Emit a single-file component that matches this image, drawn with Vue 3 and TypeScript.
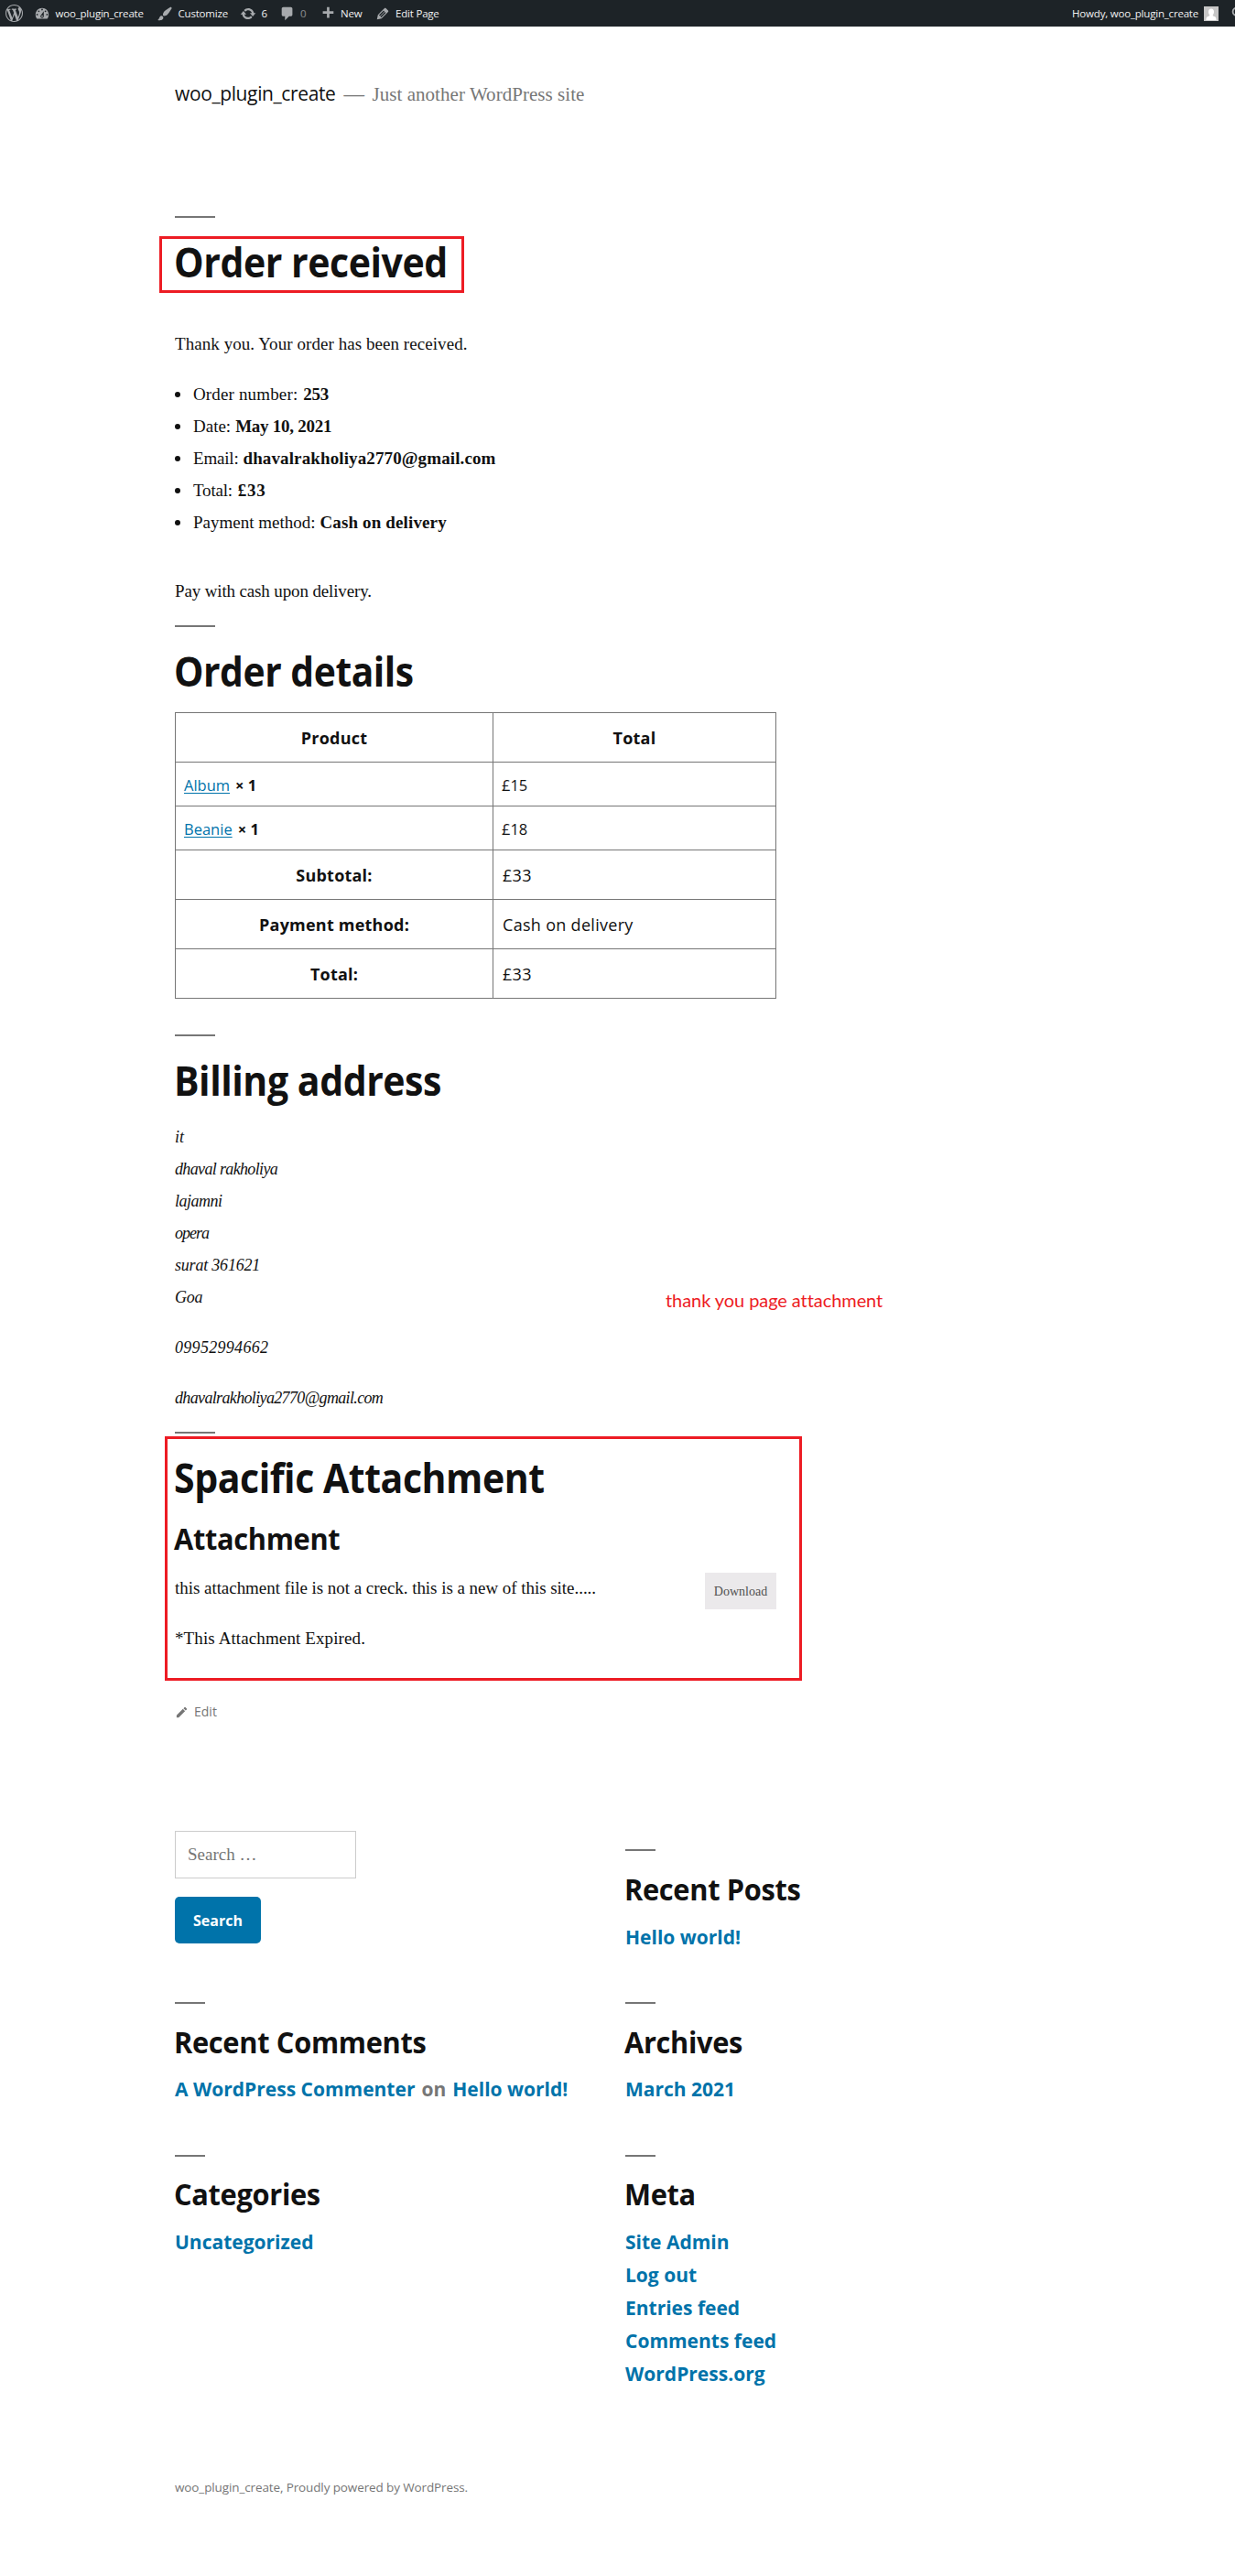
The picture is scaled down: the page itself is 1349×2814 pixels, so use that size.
<script setup lang="ts">
interface OrderField { label: string; value: string; cls: string }
interface FooterWidget { title: string; links: string[]; cls: string }

const fields: OrderField[] = [
  { label: 'Order number:', value: '253', cls: 'f-number' },
  { label: 'Date:', value: 'May 10, 2021', cls: 'f-date' },
  { label: 'Email:', value: 'dhavalrakholiya2770@gmail.com', cls: 'f-email' },
  { label: 'Total:', value: '£33', cls: 'f-total' },
  { label: 'Payment method:', value: 'Cash on delivery', cls: 'f-method' },
]
const products = [
  { name: 'Album', qty: 1, total: '£15' },
  { name: 'Beanie', qty: 1, total: '£18' },
]
const totals = [
  { label: 'Subtotal:', value: '£33' },
  { label: 'Payment method:', value: 'Cash on delivery' },
  { label: 'Total:', value: '£33' },
]
const address: string[] = ['it', 'dhaval rakholiya', 'lajamni', 'opera', 'surat 361621', 'Goa']
const archives: FooterWidget = { title: 'Archives', links: ['March 2021'], cls: 'archives' }
const categories: FooterWidget = { title: 'Categories', links: ['Uncategorized'], cls: 'categories' }
const meta: FooterWidget = {
  title: 'Meta',
  links: ['Site Admin', 'Log out', 'Entries feed', 'Comments feed', 'WordPress.org'],
  cls: 'meta',
}
</script>

<template>
  <div class="page">
    <nav class="adminbar">
      <svg class="icon wp" viewBox="0 0 20 20"><path d="M20 10c0-5.51-4.49-10-10-10C4.48 0 0 4.49 0 10c0 5.52 4.48 10 10 10 5.51 0 10-4.48 10-10zM7.78 15.37L4.37 6.22c.55-.02 1.17-.08 1.17-.08.5-.06.44-1.13-.06-1.11 0 0-1.45.11-2.37.11-.18 0-.37 0-.58-.01C4.12 2.69 6.87 1.11 10 1.11c2.33 0 4.45.87 6.05 2.34-.68-.11-1.65.39-1.65 1.58 0 .74.45 1.36.9 2.1.35.61.55 1.36.55 2.46 0 1.49-1.4 5-1.4 5l-3.03-8.37c.54-.02.82-.17.82-.17.5-.05.44-1.25-.06-1.22 0 0-1.44.12-2.38.12-.87 0-2.33-.12-2.33-.12-.5-.03-.56 1.2-.06 1.22l.92.08 1.26 3.41zM17.41 10c.24-.64.74-1.87.43-4.25.7 1.29 1.05 2.71 1.05 4.25 0 3.29-1.73 6.24-4.4 7.78.97-2.59 1.94-5.2 2.92-7.78zM6.1 18.09C3.12 16.65 1.11 13.53 1.11 10c0-1.3.23-2.48.72-3.59C3.25 10.3 4.67 14.2 6.1 18.09zm4.03-6.63l2.58 6.98c-.86.29-1.76.45-2.71.45-.79 0-1.57-.11-2.29-.33.81-2.38 1.62-4.74 2.42-7.1z" /></svg>
      <a class="item site"><svg class="icon" viewBox="0 0 20 20"><path d="M3.76 16h12.48c1.1-1.37 1.76-3.11 1.76-5 0-4.42-3.58-8-8-8s-8 3.58-8 8c0 1.89.66 3.63 1.76 5zM10 4c.55 0 1 .45 1 1s-.45 1-1 1-1-.45-1-1 .45-1 1-1zM6 6c.55 0 1 .45 1 1s-.45 1-1 1-1-.45-1-1 .45-1 1-1zm8 0c.55 0 1 .45 1 1s-.45 1-1 1-1-.45-1-1 .45-1 1-1zm-5.37 5.55L12 7v6c0 1.1-.9 2-2 2s-2-.9-2-2c0-.57.24-1.08.63-1.45zM4 10c.55 0 1 .45 1 1s-.45 1-1 1-1-.45-1-1 .45-1 1-1zm12 0c.55 0 1 .45 1 1s-.45 1-1 1-1-.45-1-1 .45-1 1-1zm-5 3c0-.55-.45-1-1-1s-1 .45-1 1 .45 1 1 1 1-.45 1-1z" /></svg><span>woo_plugin_create</span></a>
      <a class="item customize"><svg class="icon" viewBox="0 0 20 20"><path d="M18.33 3.57s.27-.8-.31-1.36c-.53-.52-1.22-.24-1.22-.24-.61.3-5.76 3.47-7.67 5.57-.86.96-2.06 3.79-1.09 4.82.92.98 3.96-.17 4.79-1 2.06-2.06 5.21-7.17 5.5-7.79zM1.4 17.65c2.37-1.56 1.46-3.41 3.23-4.64.93-.65 2.22-.62 3.08.29.63.67.8 2.57-.16 3.46-1.57 1.45-4 1.55-6.15.89z" /></svg><span>Customize</span></a>
      <a class="item updates"><svg class="icon" viewBox="0 0 20 20"><path d="M10.2 3.28c3.53 0 6.43 2.61 6.92 6h2.08l-3.5 4-3.5-4h2.32c-.45-1.97-2.21-3.45-4.32-3.45-1.45 0-2.73.71-3.54 1.78L4.95 5.66C6.23 4.2 8.11 3.28 10.2 3.28zm-.4 13.44c-3.52 0-6.43-2.61-6.92-6H.8l3.5-4c1.17 1.33 2.33 2.67 3.5 4H5.48c.45 1.97 2.21 3.45 4.32 3.45 1.45 0 2.73-.71 3.54-1.78l1.71 1.95c-1.28 1.46-3.15 2.38-5.25 2.38z" /></svg><span>6</span></a>
      <a class="item comments"><svg class="icon" viewBox="0 0 20 20"><path d="M5 2h9c1.1 0 2 .9 2 2v7c0 1.1-.9 2-2 2h-2l-5 5v-5H5c-1.1 0-2-.9-2-2V4c0-1.1.9-2 2-2z" /></svg><span class="dim">0</span></a>
      <a class="item new"><svg class="icon" viewBox="0 0 20 20"><path d="M17 7v3h-5v5H9v-5H4V7h5V2h3v5h5z" /></svg><span>New</span></a>
      <a class="item edit-page"><svg class="icon" viewBox="0 0 20 20"><path d="M13.89 3.39l2.71 2.72c.46.46.42 1.24.03 1.64l-8.01 8.02-5.56 1.16 1.16-5.58s7.6-7.63 7.99-8.03c.39-.39 1.22-.39 1.68.07zm-2.73 2.79l-5.59 5.61 1.11 1.11 5.54-5.65zm-2.97 8.23l5.58-5.6-1.07-1.08-5.59 5.6z" /></svg><span>Edit Page</span></a>
      <div class="account">
        <span>Howdy, woo_plugin_create</span>
        <svg class="avatar" viewBox="0 0 16 16"><rect width="16" height="16" fill="#c6c6c6" /><path d="M8 2.6c2 0 3 1.500 3 3.400 0 1.600-.6 2.700-1.300 3.300.2 1 .8 1.400 2 1.800 1.300.5 1.800 1.300 1.900 3.900H2.400c.1-2.600.6-3.400 1.900-3.900 1.200-.4 1.800-.8 2-1.800C5.600 8.700 5 7.600 5 6c0-1.900 1-3.400 3-3.400z" fill="#fff" /></svg>
        <svg class="finder" viewBox="0 0 20 20"><circle cx="8.500" cy="7.500" r="4.500" fill="none" stroke="#a7aaad" stroke-width="2" /><path d="M12 11l5 5" stroke="#a7aaad" stroke-width="2.400" /></svg>
      </div>
    </nav>

    <header class="site-header">
      <span class="site-title">woo_plugin_create</span>
      <span class="dash">—</span>
      <span class="tagline">Just another WordPress site</span>
    </header>

    <main class="entry">
      <h1 class="title"><span>Order received</span></h1>
      <p class="thanks">Thank you. Your order has been received.</p>
      <ul class="overview">
        <li v-for="f in fields" :key="f.label" :class="f.cls"><span>{{ f.label }}</span><strong>{{ f.value }}</strong></li>
      </ul>
      <p class="instructions">Pay with cash upon delivery.</p>

      <h1 class="title details"><span>Order details</span></h1>
      <table class="order">
        <thead><tr><th>Product</th><th>Total</th></tr></thead>
        <tbody>
          <tr v-for="p in products" :key="p.name"><td><a>{{ p.name }}</a><strong>× {{ p.qty }}</strong></td><td>{{ p.total }}</td></tr>
        </tbody>
        <tfoot>
          <tr v-for="t in totals" :key="t.label"><th>{{ t.label }}</th><td>{{ t.value }}</td></tr>
        </tfoot>
      </table>

      <h1 class="title billing"><span>Billing address</span></h1>
      <address>
        <p v-for="(a, i) in address" :key="a" :class="`line-${i}`">{{ a }}</p>
        <p class="phone">09952994662</p>
        <p class="email">dhavalrakholiya2770@gmail.com</p>
      </address>

      <h1 class="title"><span>Spacific Attachment</span></h1>
      <h2 class="attachment-heading"><span>Attachment</span></h2>
      <div class="attachment-row">
        <p class="attachment-text">this attachment file is not a creck. this is a new of this site.....</p>
        <a class="download">Download</a>
      </div>
      <p class="expired">*This Attachment Expired.</p>
      <a class="edit-link"><svg viewBox="0 0 24 24"><path d="M3 17.250V21h3.750L17.810 9.940l-3.750-3.750L3 17.250zM20.710 7.040c.39-.39.39-1.020 0-1.410l-2.340-2.340c-.39-.39-1.020-.39-1.410 0l-1.830 1.830 3.750 3.750 1.830-1.830z" /></svg><span>Edit</span></a>
    </main>

    <section class="widgets">
      <form class="widget search" @submit.prevent>
        <div class="search-field">Search …</div>
        <button>Search</button>
      </form>
      <div class="widget recent-posts"><h2><span>Recent Posts</span></h2><a>Hello world!</a></div>
      <div class="widget recent-comments"><h2><span>Recent Comments</span></h2><p><a>A WordPress Commenter</a> <span>on</span> <a>Hello world!</a></p></div>
      <div v-for="w in [archives, categories, meta]" :key="w.title" class="widget" :class="w.cls">
        <h2><span>{{ w.title }}</span></h2>
        <a v-for="l in w.links" :key="l">{{ l }}</a>
      </div>
    </section>

    <footer class="site-info">woo_plugin_create, Proudly powered by WordPress.</footer>

    <div class="mark mark-title"></div>
    <div class="mark mark-attachment"></div>
    <div class="note">thank you page attachment</div>
  </div>
</template>

<style>
body { background: #fff; }
</style>

<style scoped>
.page { position: relative; width: 1349px; height: 2814px; overflow: hidden; color: #111; font-family: 'Liberation Serif', serif; font-size: 19px; line-height: 35px; }
h1, h2, p, ul, address { margin: 0; padding: 0; }

.adminbar { display: flex; height: 29px; align-items: center; background: #1d2327; color: #f0f0f1; font: 11.5px/29px 'Open Sans', sans-serif; letter-spacing: -.2px; }
.icon { width: 18px; height: 18px; flex: none; fill: #a7aaad; }
.icon.wp { width: 19px; height: 19px; margin: 0 12px 0 6px; }
.item { display: flex; flex: none; align-items: center; white-space: nowrap; }
.item span { margin-left: 5.5px; }
.item.site { width: 134px; }
.item.customize { width: 91px; }
.item.updates { width: 42.5px; }
.item.comments { width: 44px; }
.item.new { width: 60px; }
.dim { opacity: .5; }
.account { margin-left: auto; display: flex; align-items: center; }
.avatar { width: 16px; height: 16px; margin-left: 6px; }
.finder { width: 18px; height: 18px; margin: 0 -11.5px 0 11.5px; }

.site-header { display: flex; align-items: baseline; margin: 55px 0 0 191px; height: 36px; line-height: 36px; }
.site-title { font: 21px/36px 'Open Sans', sans-serif; letter-spacing: -.38px; }
.dash, .tagline { color: #767676; font-size: 21px; }
.dash { margin-left: 9px; font-size: 22.5px; }
.tagline { margin-left: 8.5px; letter-spacing: .05px; }

.entry { width: 657px; margin: 116px 0 0 191px; }
.title { font: 700 44px/54px 'Open Sans', sans-serif; letter-spacing: -.5px; white-space: nowrap; }
.title::before { content: ''; display: block; width: 44px; height: 2px; margin-bottom: 21px; background: #767676; }
.title span, h2 span { display: block; width: max-content; transform-origin: left; transform: translateX(-1px) scaleX(.933); }
.title.details span { transform: translateX(-1px) scaleX(.928); }
.thanks { margin-top: 45px; letter-spacing: .06px; }
.overview { margin-top: 20px; list-style: none; }
.overview li { display: flex; align-items: center; }
.overview li::before { content: ''; width: 6px; height: 6px; border-radius: 50%; background: #111; margin: 1px 14px 0 0; }
.overview strong { margin-left: 5px; }
.f-number span { letter-spacing: .15px; }
.f-number strong { margin-left: 6px; letter-spacing: -.3px; }
.f-date strong { letter-spacing: -.25px; }
.f-email span { letter-spacing: -.2px; }
.f-email strong { letter-spacing: .12px; }
.f-total span { letter-spacing: -.2px; }
.f-total strong { margin-left: 6px; letter-spacing: .7px; }
.f-method strong { letter-spacing: .13px; }
.instructions { margin: 40px 0 20px; letter-spacing: -.14px; }

.order { width: 657px; margin-top: 18px; border-collapse: collapse; table-layout: fixed; font-family: 'Open Sans', sans-serif; }
.order th, .order td { border: 1px solid #767676; padding: 0 9px; height: 53px; font-size: 18px; line-height: 28px; letter-spacing: .22px; }
.order tfoot td { padding-left: 10px; letter-spacing: .3px; }
.order td { text-align: left; }
.order th:first-child, .order td:first-child { width: 328px; }
.order tbody td { height: 45px; padding-top: 2px; font-size: 16.5px; letter-spacing: 0; }
.order a { color: #0073aa; text-decoration: underline; text-underline-offset: 2px; }
.order strong { margin-left: 6px; }

.billing { margin-top: 39px; }
address { margin-top: 18px; font-size: 18px; }
.line-1, .email { letter-spacing: -.65px; }
.line-2 { letter-spacing: -.5px; }
.line-3 { letter-spacing: -1px; }
.line-4 { letter-spacing: -.2px; }
.line-5 { letter-spacing: -.3px; }
.phone { letter-spacing: .3px; }
.phone, .email { margin-top: 20px; }
.email { margin-bottom: 19px; }

.attachment-heading { font: 700 33px/40px 'Open Sans', sans-serif; letter-spacing: -.35px; margin-top: 20px; }
.attachment-row { display: flex; justify-content: space-between; align-items: flex-start; height: 35px; margin-top: 16px; white-space: nowrap; }
.attachment-text { letter-spacing: -.04px; }
.download { width: 78px; height: 40px; margin-top: 1px; background: #ebe9eb; color: #515151; font-size: 14px; line-height: 42px; text-align: center; }
.expired { margin-top: 20px; letter-spacing: .11px; }
.edit-link { display: flex; align-items: center; margin-top: 53px; color: #767676; font: 14px/20px 'Open Sans', sans-serif; }
.edit-link svg { width: 15px; height: 15px; fill: #767676; margin-right: 6px; }

.widgets { display: grid; grid-template-columns: 492px 492px; grid-template-rows: 167px 167px 277px; margin: 120px 0 0 191px; }
.widget { font: 700 21px/36px 'Open Sans', sans-serif; color: #767676; }
.widget a { color: #0073aa; display: block; width: max-content; }
.widget p { display: flex; gap: 7px; }
.widget h2 { font: 700 33px/40px 'Open Sans', sans-serif; letter-spacing: -.35px; color: #111; margin-bottom: 14px; }
.widget h2::before { content: ''; display: block; width: 33px; height: 2px; margin: 20px 0 22px; background: #767676; }
.widget.recent-comments h2, .widget.archives h2 { margin-bottom: 13px; }
.widget.categories h2::before, .widget.meta h2::before { margin-bottom: 21px; }
.widget:not(.search)::before { content: ''; display: table; }
.search-field { box-sizing: border-box; width: 198px; height: 52px; border: 1px solid #ccc; padding-left: 13px; font: 19px/50px 'Liberation Serif', serif; color: #767676; }
button { display: block; margin: 20px 0 0; width: 94px; height: 51px; border: 0; border-radius: 5px; background: #0073aa; color: #fff; padding: 0; font: 700 16px/53px 'Open Sans', sans-serif; }
.site-info { margin: 96px 0 0 191px; color: #767676; font: 13.5px/20px 'Open Sans', sans-serif; letter-spacing: -.12px; }

.mark { position: absolute; box-sizing: border-box; border: 3px solid #ed1c24; }
.mark-title { left: 174px; top: 258px; width: 333px; height: 62px; }
.mark-attachment { left: 180px; top: 1569px; width: 696px; height: 267px; }
.note { position: absolute; left: 727px; top: 1405px; color: #ed1c24; font: 20px/30px Lato, sans-serif; letter-spacing: -.07px; white-space: nowrap; }
</style>
